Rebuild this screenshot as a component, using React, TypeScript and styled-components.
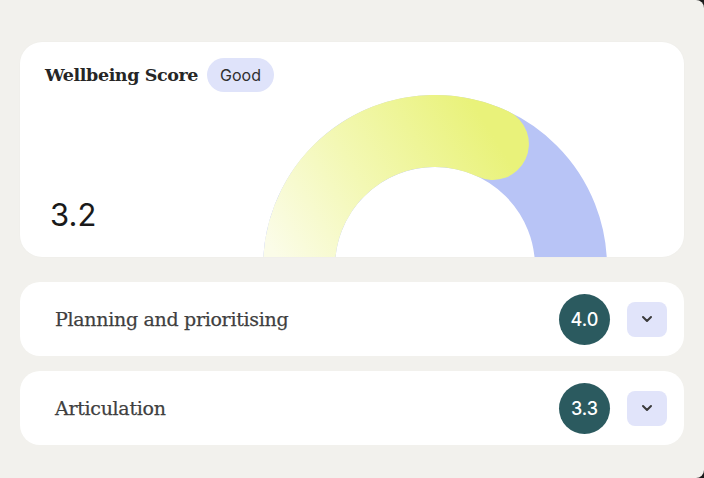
import styled, { createGlobalStyle } from 'styled-components'

const GlobalStyle = createGlobalStyle`
    html, body {
        margin: 0;
        padding: 0;
        background: #1b1b1b;
    }
    #root {
        width: 704px;
        height: 478px;
    }
`

const skills = [
    { name: 'Planning and prioritising', score: '4.0' },
    { name: 'Articulation', score: '3.3' },
]

const SCORE = 3.2
const MAX = 5

const Gauge = ({ value }: { value: number }) => {
    const cx = 172
    const cy = 172
    const rMid = 136
    const phi = Math.PI - (value / MAX) * Math.PI
    const ex = cx + rMid * Math.cos(phi)
    const ey = cy - rMid * Math.sin(phi)

    return (
        <GaugeSvg width="344" height="172" viewBox="0 0 344 172">
            <defs>
                <linearGradient id="yel" gradientUnits="userSpaceOnUse" x1="20" y1="172" x2="230" y2="40">
                    <stop offset="0" stopColor="#fbfce8" />
                    <stop offset="0.45" stopColor="#f3f8b4" />
                    <stop offset="1" stopColor="#e9f27a" />
                </linearGradient>
            </defs>
            <path
                d={`M ${cx - rMid} ${cy} A ${rMid} ${rMid} 0 0 1 ${cx + rMid} ${cy}`}
                fill="none"
                stroke="#b8c4f6"
                strokeWidth="72"
            />
            <path
                d={`M ${cx - rMid} ${cy + 2} L ${cx - rMid} ${cy} A ${rMid} ${rMid} 0 0 1 ${ex} ${ey}`}
                fill="none"
                stroke="url(#yel)"
                strokeWidth="72"
                strokeLinecap="round"
            />
        </GaugeSvg>
    )
}

const Chevron = () => (
    <svg width="12" height="8" viewBox="0 0 12 8">
        <path d="M2 2 L6 6 L10 2" fill="none" stroke="#3a3a3a" strokeWidth="2" strokeLinecap="round" strokeLinejoin="round" />
    </svg>
)

export default function App() {
    return (
        <Page>
            <GlobalStyle />
            <ScoreCard>
                <CardHeader>
                    <Title>Wellbeing Score</Title>
                    <Pill>Good</Pill>
                </CardHeader>
                <CardBody>
                    <Value>{SCORE.toFixed(1)}</Value>
                    <Gauge value={SCORE} />
                </CardBody>
            </ScoreCard>
            <List>
                {skills.map((s) => (
                    <Row key={s.name}>
                        <RowLabel>{s.name}</RowLabel>
                        <RowRight>
                            <Badge>{s.score}</Badge>
                            <ToggleBtn aria-label="expand">
                                <Chevron />
                            </ToggleBtn>
                        </RowRight>
                    </Row>
                ))}
            </List>
        </Page>
    )
}

const Page = styled.div`
    box-sizing: border-box;
    width: 704px;
    height: 478px;
    background: #f2f1ed;
    border-radius: 0 8px 8px 0;
    padding: 42px 20px 0 20px;
    display: flex;
    flex-direction: column;
    gap: 25px;
`

const ScoreCard = styled.section`
    height: 215px;
    background: #fff;
    border-radius: 22px;
    overflow: hidden;
    display: flex;
    flex-direction: column;
    box-shadow: 0 0 2px rgba(0, 0, 0, 0.03);
`

const CardHeader = styled.div`
    display: flex;
    align-items: center;
    gap: 9px;
    padding: 16px 0 0 25px;
    height: 34px;
`

const Title = styled.h2`
    margin: 0;
    font-family: "DejaVu Serif", serif;
    font-weight: 600;
    font-size: 17.5px;
    color: #262626;
    letter-spacing: -0.4px;
`

const Pill = styled.span`
    height: 34px;
    padding: 0 13px;
    display: flex;
    align-items: center;
    border-radius: 17px;
    background: #dfe3fa;
    font-family: Inter, "Liberation Sans", sans-serif;
    font-size: 16px;
    color: #2f2f2f;
`

const CardBody = styled.div`
    height: 165px;
    display: flex;
    justify-content: space-between;
    align-items: flex-start;
    padding: 0 77px 0 30px;
`

const Value = styled.div`
    align-self: flex-end;
    padding-bottom: 24px;
    font-family: Inter, "Liberation Sans", sans-serif;
    font-size: 31px;
    color: #1a1a1a;
`

const GaugeSvg = styled.svg`
    display: block;
    margin-top: 3px;
    flex-shrink: 0;
`

const List = styled.div`
    display: flex;
    flex-direction: column;
    gap: 15px;
`

const Row = styled.div`
    height: 74px;
    background: #fff;
    border-radius: 20px;
    display: flex;
    align-items: center;
    justify-content: space-between;
    padding: 0 17px 0 35px;
    box-sizing: border-box;
`

const RowLabel = styled.span`
    font-family: "DejaVu Serif", serif;
    font-size: 19px;
    color: #3f3f3f;
    letter-spacing: -0.3px;
    -webkit-text-stroke: 0.25px #3f3f3f;
`

const RowRight = styled.div`
    display: flex;
    align-items: center;
    gap: 17px;
`

const Badge = styled.div`
    width: 51px;
    height: 51px;
    border-radius: 50%;
    background: #2b5a5f;
    color: #fff;
    display: flex;
    align-items: center;
    justify-content: center;
    font-family: Inter, "Liberation Sans", sans-serif;
    font-weight: 500;
    font-size: 18px;
`

const ToggleBtn = styled.button`
    width: 40px;
    height: 35px;
    border: none;
    border-radius: 8px;
    background: #e1e4fa;
    display: flex;
    align-items: center;
    justify-content: center;
    padding: 0;
    cursor: pointer;
`
